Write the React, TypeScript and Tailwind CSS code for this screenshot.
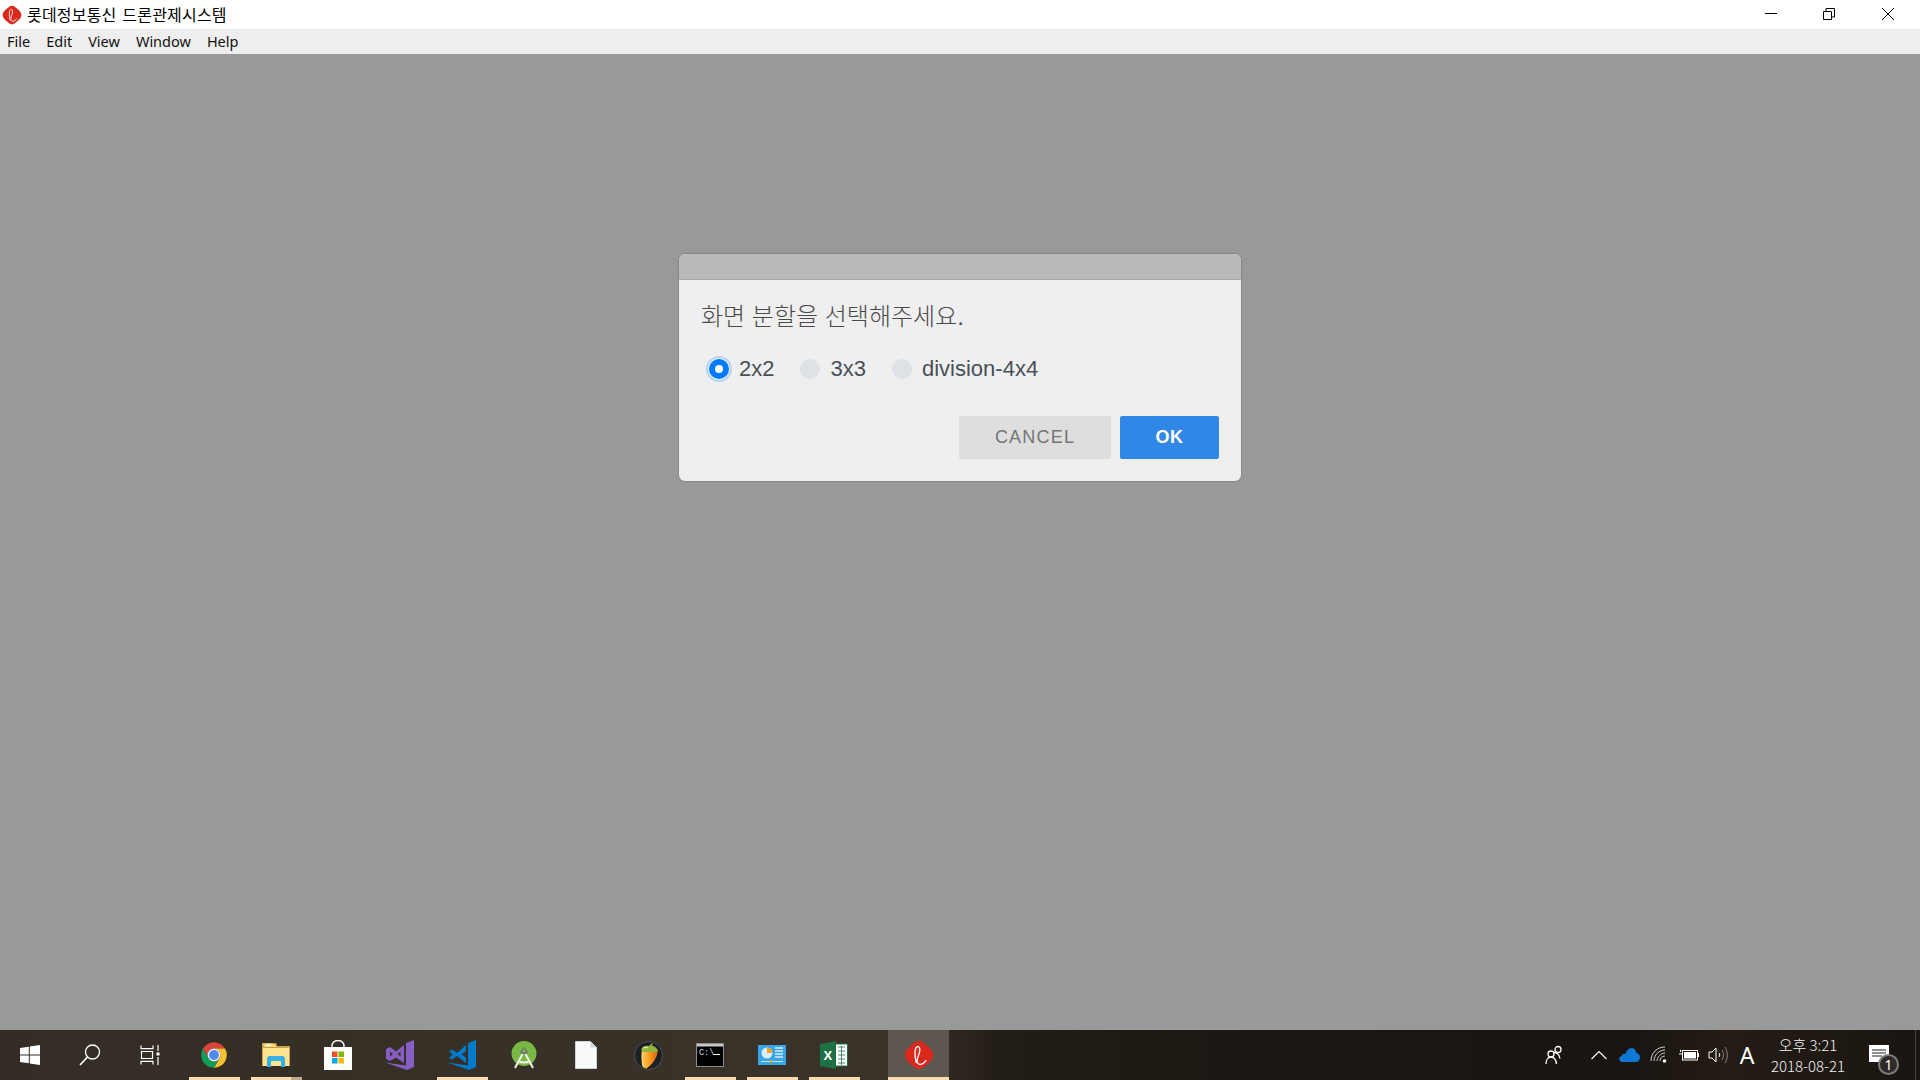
import type { ReactNode } from "react";

const underlineColor = "bg-[#fbdcae]";

function LotteLogo({ size = 20 }: { size?: number }) {
  return (
    <svg width={size} height={size} viewBox="0 0 32 32">
      <path
        d="M16 1c3 0 5 2 8 4.500s7 6 7 10.500-4 8-7 10.500-5 4.500-8 4.500-5-2-8-4.500S1 20.500 1 16s4-8 7-10.500S13 1 16 1z"
        fill="#da291c"
      />
      <path
        d="M13 24c-2-8-2-17 2-17 3 0 2 7-.5 12-1.500 5 .5 7.500 3.500 7 2-.5 4-2 5.500-4"
        fill="none"
        stroke="#fff"
        strokeWidth="1.400"
        strokeLinecap="round"
      />
    </svg>
  );
}

function WindowsIcon() {
  return (
    <svg width="20" height="20" viewBox="0 0 20 20" fill="#fff">
      <path d="M0 3l8.800-1.300v7.800H0zM9.800 1.500L20 0v9.500H9.800zM0 10.500h8.800v7.800L0 17zM9.800 10.500H20V20L9.800 18.500z" />
    </svg>
  );
}

function SearchIcon() {
  return (
    <svg width="22" height="22" viewBox="0 0 22 22" fill="none" stroke="#fff" strokeWidth="1.300">
      <circle cx="13.500" cy="8" r="7" />
      <path d="M8.500 13L1 21" strokeWidth="1.600" />
    </svg>
  );
}

function TaskViewIcon() {
  return (
    <svg width="20" height="20" viewBox="0 0 20 20" fill="none" stroke="#fff" strokeWidth="1.200">
      <path d="M1 0.600v3h12v-3M1.500 6.500h11v7h-11zM1 19.400v-3h12v3M18 0v6M18 12v8" />
      <rect x="16.500" y="7.500" width="3" height="3" fill="#fff" stroke="none" />
    </svg>
  );
}

function ChromeIcon() {
  return (
    <svg width="28" height="28" viewBox="0 0 48 48">
      <path d="M43 13H24a11 11 0 0 0-9.500 16.500L5 13a22 22 0 0 1 38 0z" fill="#db4437" />
      <path d="M43 13a22 22 0 0 1-19 33l9.500-16.500A11 11 0 0 0 24 13z" fill="#fbc02d" />
      <path d="M24 46A22 22 0 0 1 5 13l9.500 16.500a11 11 0 0 0 19 0z" fill="#0f9d58" />
      <circle cx="24" cy="24" r="11" fill="#f1f1f1" />
      <circle cx="24" cy="24" r="8.500" fill="#4e8bf0" />
    </svg>
  );
}

function ExplorerIcon() {
  return (
    <svg width="28" height="26" viewBox="0 0 28 26">
      <path d="M0 1h11l2 3h15v20H0z" fill="#c9a14d" />
      <path d="M1 6h26v18H1z" fill="#ffe48e" />
      <rect x="1.500" y="1.500" width="13" height="3.500" fill="#f9d46a" />
      <rect x="4" y="2.500" width="5" height="1.500" fill="#fff" />
      <path d="M5 25V17q0-3 3-3h12q3 0 3 3v8h-4v-5a1 1 0 0 0-1-1h-8a1 1 0 0 0-1 1v5z" fill="#37b0e6" />
    </svg>
  );
}

function StoreIcon() {
  return (
    <svg width="30" height="30" viewBox="0 0 30 30">
      <path d="M9 9V5.500a6 5 0 0 1 12 0V9" fill="none" stroke="#fff" strokeWidth="1.400" />
      <path d="M1 7h28v23H1z" fill="#fff" />
      <rect x="9" y="11.500" width="5.500" height="5.500" fill="#f25022" />
      <rect x="15.500" y="11.500" width="5.500" height="5.500" fill="#7fba00" />
      <rect x="9" y="18" width="5.500" height="5.500" fill="#00a4ef" />
      <rect x="15.500" y="18" width="5.500" height="5.500" fill="#ffb900" />
    </svg>
  );
}

function VisualStudioIcon() {
  return (
    <svg width="30" height="30" viewBox="0 0 30 30" fill="#865fc5">
      <path d="M21 3l8-3v27l-7 3L0 22.500l21 3z" />
      <path
        d="M1 9l4-2 6 4.500L19 5v18l-8-5.500L5 21l-4-2zM5 11.500v5l3-2.500zM12.500 14l3 2.500v-5z"
        fillRule="evenodd"
      />
    </svg>
  );
}

function VSCodeIcon() {
  return (
    <svg width="30" height="30" viewBox="0 0 30 30" fill="#007acc">
      <path d="M21 3l8-3v27l-7 3L0 22.500l21 3z" />
      <path d="M2 11l3-1.500 5 3.500L19 5v6.500L14.500 14.500 19 17.500V23l-9-7-5 3.500L2 18l3.500-3.500z" />
    </svg>
  );
}

function AndroidStudioIcon() {
  return (
    <svg width="28" height="28" viewBox="0 0 28 28">
      <circle cx="14" cy="12.500" r="12.500" fill="#78b843" />
      <path d="M10.500 10l3.500-4 3.500 4v3h-7z" fill="#6d7a66" />
      <circle cx="14" cy="10" r="1.300" fill="#8fc25e" />
      <path
        d="M12.500 13L5 27M15.500 13L23 27M7.500 20c4 1.800 9 1.800 13 0"
        fill="none"
        stroke="#eef2e8"
        strokeWidth="2"
      />
    </svg>
  );
}

function FileIcon() {
  return (
    <svg width="22" height="28" viewBox="0 0 22 28">
      <path d="M0.500 0.500h15l6 6v21h-21z" fill="#f7f9fb" stroke="#cfd3d6" />
      <path d="M15.500 0.500v6h6z" fill="#d4d8dc" />
    </svg>
  );
}

function FLStudioIcon() {
  return (
    <svg width="29" height="29" viewBox="0 0 29 29">
      <defs>
        <linearGradient id="flFruit" x1="0" y1="0" x2="1" y2="0">
          <stop offset="0" stopColor="#ffd46b" />
          <stop offset="0.500" stopColor="#fa9a1e" />
          <stop offset="1" stopColor="#d9670c" />
        </linearGradient>
      </defs>
      <circle cx="14.500" cy="14.500" r="14" fill="#1d2022" stroke="#4b5054" />
      <path d="M8 9c4-2 12-2 15.500 0 1 5-4 14-11 18.500C10 27 8 26 8 24c-.5-5-1-10 0-15z" fill="url(#flFruit)" />
      <path d="M7 9c1-3 4-5 8-4 1-1 2-2 4-3l-1 3c3 0 5 2 6 5-3 2-5 1-7 .5-3 1-7 1.500-10-1.500z" fill="#8fb33c" />
      <path d="M9 7c2-1 4-1 5 0" stroke="#d7e58e" strokeWidth="1.500" fill="none" />
    </svg>
  );
}

function CmdIcon() {
  return (
    <svg width="28" height="24" viewBox="0 0 28 24">
      <rect x="0.500" y="0.500" width="27" height="23" fill="#000" stroke="#8a8a8a" />
      <rect x="1" y="1" width="26" height="2.500" fill="#c8c8c8" />
      <text x="3" y="11.500" fill="#dcdcdc" fontSize="8.500" fontFamily="'Liberation Mono', monospace">
        C:\
      </text>
      <rect x="17" y="11" width="7" height="1" fill="#fff" />
    </svg>
  );
}

function ControlPanelIcon() {
  return (
    <svg width="28" height="22" viewBox="0 0 28 22">
      <rect width="28" height="20" y="1" fill="#3aa4e8" />
      <circle cx="9" cy="9" r="5.500" fill="#d9effb" />
      <path d="M9 9V3.500a5.500 5.500 0 0 1 5.500 5.500z" fill="#f4a01f" />
      <path d="M17 4h8M17 7h8M17 10h8M17 13h8" stroke="#d2ecfb" strokeWidth="1.500" />
      <path d="M3 17.500h22" stroke="#bfe3f8" />
      <rect x="12" y="16" width="2" height="3" fill="#f4a01f" />
    </svg>
  );
}

function ExcelIcon() {
  return (
    <svg width="28" height="28" viewBox="0 0 28 28">
      <path d="M14 3h13.500v22H14z" fill="#fff" stroke="#1e7145" />
      <path d="M18 6h7M18 10h7M18 14h7M18 18h7M18 22h7M21.500 5v19" stroke="#1e7145" strokeWidth="0.800" />
      <path d="M0 3l16-3v28L0 25z" fill="#1e7145" />
      <text x="3.500" y="19" fill="#fff" fontSize="13" fontWeight="700" fontFamily="'Liberation Sans', sans-serif">
        X
      </text>
    </svg>
  );
}

function PeopleIcon() {
  return (
    <svg width="20" height="20" viewBox="0 0 20 20" fill="none" stroke="#fff" strokeWidth="1.300">
      <circle cx="13" cy="4.500" r="3" />
      <circle cx="6" cy="9" r="3" />
      <path d="M9 7.500c1.500 0 5 1 6 6M1 19c0-4 2-7 5-7s5 3 5.500 7" />
    </svg>
  );
}

function ChevronUpIcon() {
  return (
    <svg width="16" height="10" viewBox="0 0 16 10" fill="none" stroke="#fff" strokeWidth="1.100">
      <path d="M0.500 9L8 1.500 15.500 9" />
    </svg>
  );
}

function OneDriveIcon() {
  return (
    <svg width="21" height="14" viewBox="0 0 21 14" fill="#0f78d4">
      <path d="M3 14a3 3 0 0 1-.5-5.900C3 6 5 5.500 6.500 6 7.500 2 10 0 12.500 0 15 0 17 2 17.500 5c2 .3 3.500 2 3.500 4.500S19 14 17 14z" />
    </svg>
  );
}

function WifiIcon() {
  return (
    <svg width="18" height="18" viewBox="0 0 18 18" fill="none" stroke="#cfcfcf" strokeWidth="1">
      <path d="M1 15C1 7 7 1 15 1M4 15c0-6 5-11 11-11M7 15c0-4 4-8 8-8M10 15c0-3 2-5 5-5" />
      <circle cx="14.500" cy="15" r="1.800" fill="#fff" stroke="none" />
    </svg>
  );
}

function BatteryIcon() {
  return (
    <svg width="20" height="12" viewBox="0 0 20 12">
      <rect x="3.500" y="1.500" width="15" height="9.500" fill="none" stroke="#fff" />
      <rect x="5" y="3" width="12" height="6.500" fill="#fff" />
      <rect x="19" y="4" width="1" height="4" fill="#fff" />
      <path d="M0 5h3M1.500 1v2" stroke="#fff" />
    </svg>
  );
}

function SpeakerIcon() {
  return (
    <svg width="21" height="18" viewBox="0 0 21 18" fill="none" stroke="#fff" strokeWidth="1">
      <path d="M1 6h3l4-4v14l-4-4H1z" />
      <path d="M11 7c1 1 1 3 0 4" />
      <path d="M14 4c2 3 2 7 0 10M17 1c3 5 3 11 0 16" stroke="#8a8580" />
    </svg>
  );
}

function NotificationIcon() {
  return (
    <div className="relative w-[30px] h-[40px]">
      <svg width="20" height="20" viewBox="0 0 20 20" className="absolute left-0 top-[10px]">
        <path d="M0 0h20v17H0z" fill="#fff" />
        <path d="M3 5h14M3 8h14M3 11h10" stroke="#222" strokeWidth="1" />
      </svg>
      <div className="absolute right-0 bottom-0 w-[21px] h-[21px] rounded-full bg-[#2e2a28] border-2 border-[#7d7d7d] flex items-center justify-center text-white text-[14px] leading-none font-['Noto_Sans',sans-serif]">
        1
      </div>
    </div>
  );
}

const apps: { icon: ReactNode; running?: boolean; split?: boolean }[] = [
  { icon: <ChromeIcon />, running: true },
  { icon: <ExplorerIcon />, running: true, split: true },
  { icon: <StoreIcon /> },
  { icon: <VisualStudioIcon /> },
  { icon: <VSCodeIcon />, running: true },
  { icon: <AndroidStudioIcon /> },
  { icon: <FileIcon /> },
  { icon: <FLStudioIcon /> },
  { icon: <CmdIcon />, running: true },
  { icon: <ControlPanelIcon />, running: true },
  { icon: <ExcelIcon />, running: true },
];

const menus = ["File", "Edit", "View", "Window", "Help"];

function Radio({ label, checked }: { label: string; checked?: boolean }) {
  return (
    <label className="flex items-center gap-[10px]">
      {checked ? (
        <span className="w-[20px] h-[20px] rounded-full bg-[#007bff] flex items-center justify-center shadow-[0_0_0_1px_#e4eefa,0_0_0_3px_#b5d5f8]">
          <span className="w-[8px] h-[8px] rounded-full bg-white" />
        </span>
      ) : (
        <span className="w-[20px] h-[20px] rounded-full bg-[#dee2e6]" />
      )}
      <span className="text-[22px] leading-[28px] text-[#495057]">{label}</span>
    </label>
  );
}

export default function App() {
  return (
    <div className="h-screen w-full flex flex-col overflow-hidden font-['Liberation_Sans',sans-serif]">
      {/* Title bar */}
      <div className="h-[29px] bg-white flex items-center shrink-0">
        <div className="pl-[2px] pr-[5px] flex items-center">
          <LotteLogo />
        </div>
        <span className="text-[16px] leading-[22px] mb-[2px] tracking-[0.200px] [word-spacing:2px] text-black font-['Noto_Sans_CJK_KR',sans-serif]">
          롯데정보통신 드론관제시스템
        </span>
        <div className="ml-auto flex items-center h-full pr-[3px] pb-[2px]">
          <button className="w-[58px] h-full flex items-center justify-center">
            <span className="block w-[12px] h-px bg-black" />
          </button>
          <button className="w-[58px] h-full flex items-center justify-center">
            <svg width="12" height="12" viewBox="0 0 12 12" fill="none" stroke="#000">
              <path d="M0.500 3.500h8v8h-8zM3 3V0.500h8.500V9H9" />
            </svg>
          </button>
          <button className="ml-[1px] w-[58px] h-full flex items-center justify-center">
            <svg width="12" height="12" viewBox="0 0 12 12" fill="none" stroke="#000">
              <path d="M0 0l12 12M12 0L0 12" />
            </svg>
          </button>
        </div>
      </div>

      {/* Menu bar */}
      <div className="h-[25px] bg-[#eeeeee] flex items-center pl-[7px] gap-[16px] shrink-0 text-[14.500px] text-[#111] font-['Noto_Sans',sans-serif]">
        {menus.map((m) => (
          <span key={m}>{m}</span>
        ))}
      </div>

      {/* Backdrop + dialog */}
      <div className="flex-1 bg-[#999999] flex justify-center pt-[200px]">
        <div className="w-[562px] h-[227px] rounded-[6px] overflow-hidden bg-[#efefef] shadow-[0_0_2px_rgba(0,0,0,0.4)] flex flex-col">
          <div className="h-[26px] bg-[#bababa] border-b border-[#a8a8a8] shrink-0" />
          <div className="px-[22px] pt-[22px] flex flex-col">
            <p className="text-[24px] leading-[30px] font-light text-[#4a4a4a] font-['Liberation_Sans','Noto_Sans_CJK_KR',sans-serif]">
              화면 분할을 선택해주세요.
            </p>
            <div className="flex items-center gap-[26px] mt-[23px] pl-[8px]">
              <Radio label="2x2" checked />
              <Radio label="3x3" />
              <Radio label="division-4x4" />
            </div>
            <div className="flex justify-end gap-[9px] mt-[33px]">
              <button className="w-[152px] h-[43px] rounded-[2px] bg-[#dedede] text-[#757575] text-[18px] tracking-[1.200px]">
                CANCEL
              </button>
              <button className="w-[99px] h-[43px] rounded-[2px] bg-[#3087e6] text-white text-[18px] font-bold tracking-[0.500px]">
                OK
              </button>
            </div>
          </div>
        </div>
      </div>

      {/* Taskbar */}
      <div className="h-[50px] shrink-0 flex items-stretch bg-[linear-gradient(90deg,#332d25_0%,#3a3329_47%,#221d16_52%,#1b1712_65%,#1a1511_85%,#241c15_90%,#1a1511_100%)]">
        <div className="w-[60px] flex items-center justify-center">
          <WindowsIcon />
        </div>
        <div className="w-[60px] flex items-center justify-center">
          <SearchIcon />
        </div>
        <div className="w-[60px] flex items-center justify-center">
          <TaskViewIcon />
        </div>
        <div className="flex ml-[3px]">
          {apps.map((app, i) => (
            <div key={i} className="relative w-[62px] flex items-center justify-center">
              {app.icon}
              {app.running && (
                <span className={`absolute bottom-0 left-[6px] right-[5px] h-[3px] ${underlineColor}`} />
              )}
              {app.split && <span className="absolute bottom-0 right-[5px] w-[11px] h-[3px] bg-[#c0ab8c]" />}
            </div>
          ))}
        </div>
        <div className="relative ml-[23px] w-[61px] bg-[#5d574f] flex items-center justify-center">
          <LotteLogo size={30} />
          <span className={`absolute bottom-0 inset-x-0 h-[3px] ${underlineColor}`} />
        </div>

        <div className="ml-auto flex items-stretch">
          <div className="w-[30px] flex items-center justify-center">
            <PeopleIcon />
          </div>
          <div className="ml-[14px] w-[30px] flex items-center justify-center">
            <ChevronUpIcon />
          </div>
          <div className="w-[30px] flex items-center justify-center">
            <OneDriveIcon />
          </div>
          <div className="w-[30px] flex items-center justify-center">
            <WifiIcon />
          </div>
          <div className="w-[29px] flex items-center justify-center">
            <BatteryIcon />
          </div>
          <div className="w-[30px] flex items-center justify-center">
            <SpeakerIcon />
          </div>
          <div className="ml-[1px] w-[26px] flex items-center justify-center text-white text-[23px] font-['Noto_Sans',sans-serif]">
            A
          </div>
          <div className="ml-[3px] w-[90px] pb-[1px] flex flex-col items-center justify-center text-[#f4f4f4] text-[15px] leading-[21px] font-['Noto_Sans_CJK_KR',sans-serif] font-light">
            <span>오후 3:21</span>
            <span>2018-08-21</span>
          </div>
          <div className="ml-[16px] w-[30px] flex items-center">
            <NotificationIcon />
          </div>
          <div className="ml-[16px] w-[5px] border-l border-[#4a4642]" />
        </div>
      </div>
    </div>
  );
}
